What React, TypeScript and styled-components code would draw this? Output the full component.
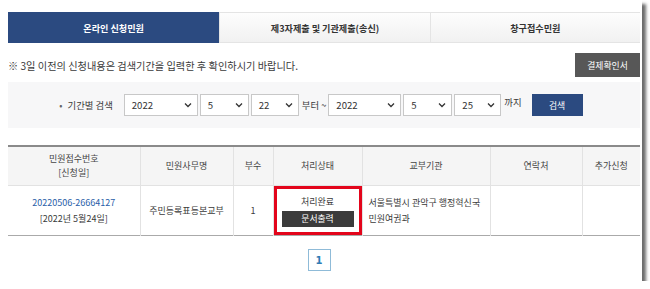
import React, { useState } from 'react'
import styled, { createGlobalStyle } from 'styled-components'

const GlobalStyle = createGlobalStyle`
  html, body {
    margin: 0;
    padding: 0;
    background: #ffffff;
  }
  body {
    font-family: "Noto Sans CJK KR", "Noto Sans", sans-serif;
    color: #333;
  }
`

const Frame = styled.div`
  width: 642px;
  height: 281px;
  box-sizing: border-box;
  padding: 12px 2px 0 8px;
  background: #fff;
  box-shadow: 4px 4px 3px rgba(60, 60, 60, 0.75);
  display: flex;
  flex-direction: column;
`

const Tabs = styled.div`
  display: flex;
  height: 31px;
  border-top: 1px solid #e4e4e4;
  border-bottom: 1px solid #e4e4e4;
  box-sizing: border-box;
`

const Tab = styled.div<{ active?: boolean; w: number }>`
  width: ${({ w }) => w}px;
  display: flex;
  align-items: center;
  justify-content: center;
  font-size: 9.1px;
  font-weight: 700;
  color: ${({ active }) => (active ? '#fff' : '#333')};
  background: ${({ active }) => (active ? '#2b4a80' : 'linear-gradient(#fdfdfd, #f1f1f1)')};
  border-left: ${({ active }) => (active ? 'none' : '1px solid #e4e4e4')};
  margin: ${({ active }) => (active ? '-1px 0' : '0')};
`

const NoticeRow = styled.div`
  display: flex;
  align-items: center;
  justify-content: space-between;
  margin-top: 10px;
  height: 24px;
`

const Notice = styled.p`
  margin: 0;
  font-size: 10.2px;
  color: #3a3a3a;
`

const DarkButton = styled.button`
  border: none;
  background: #575757;
  color: #fff;
  font-family: inherit;
  font-size: 8.8px;
  height: 24px;
  width: 65px;
  padding: 0;
`

const SearchPanel = styled.div`
  margin-top: 5px;
  height: 46px;
  background: #f7f7f8;
  display: flex;
  align-items: center;
  justify-content: center;
  padding-right: 6px;
  font-size: 9.4px;
  color: #3a3a3a;
`

const Label = styled.span`
  margin-right: 11px;
  &::before {
    content: '•';
    margin-right: 5px;
    color: #666;
  }
`

const SelectBox = styled.div<{ w: number }>`
  width: ${({ w }) => w}px;
  height: 22px;
  box-sizing: border-box;
  border: 1px solid #c8c8c8;
  background: #fff;
  display: flex;
  align-items: center;
  justify-content: space-between;
  padding: 0 5px 0 7px;
  margin-right: 2px;
  font-size: 9.6px;
  color: #333;
`

const Word = styled.span<{ raised?: boolean }>`
  margin: 0 2px 0 1px;
  align-self: ${({ raised }) => (raised ? 'flex-start' : 'center')};
  margin-top: ${({ raised }) => (raised ? '13px' : '0')};
`

const BlueButton = styled.button`
  margin-left: 8px;
  width: 51px;
  height: 22px;
  border: none;
  background: #2b4a80;
  color: #fff;
  font-family: inherit;
  font-size: 8.8px;
  padding: 0;
`

const Table = styled.table`
  margin-top: 17px;
  width: 632px;
  border-collapse: collapse;
  table-layout: fixed;
  border-top: 2px solid #8a8a8a;
  border-bottom: 1px solid #aaa;
  font-size: 9px;
`

const Th = styled.th`
  height: 38px;
  padding: 0;
  background: #f5f5f5;
  color: #444;
  font-weight: 400;
  line-height: 1.6;
  border-left: 1px solid #e2e2e2;
  border-bottom: 1px solid #e2e2e2;
  &:first-child {
    border-left: none;
  }
`

const Td = styled.td<{ left?: boolean; highlight?: boolean }>`
  height: 49px;
  text-align: ${({ left }) => (left ? 'left' : 'center')};
  padding: ${({ left }) => (left ? '0 6px' : '0')};
  color: #3a3a3a;
  line-height: 1.7;
  border-left: 1px solid #e2e2e2;
  box-shadow: ${({ highlight }) => (highlight ? 'inset 0 0 0 3px #e3051b' : 'none')};
  &:first-child {
    border-left: none;
  }
`

const Link = styled.a`
  color: #2a5ea8;
  text-decoration: none;
`

const PrintButton = styled.div`
  margin: 1px auto 0;
  width: 72px;
  height: 16px;
  line-height: 16px;
  background: #3b3b3b;
  color: #fff;
  font-size: 8.8px;
`

const Pager = styled.div`
  display: flex;
  justify-content: center;
  margin-top: 13px;
  padding-right: 10px;
`

const PageNum = styled.button`
  width: 23px;
  height: 22px;
  border: 1px solid #8fbbd8;
  background: #fff;
  color: #2f7cb4;
  font-family: "DejaVu Sans", sans-serif;
  font-weight: 700;
  font-size: 10px;
  padding: 0;
`

const Chevron = () => (
  <svg width="8" height="6" viewBox="0 0 8 6">
    <path d="M1 1.5 L4 4.5 L7 1.5" fill="none" stroke="#333" strokeWidth="1.3" />
  </svg>
)

const Select = ({ value, w }: { value: string; w: number }) => (
  <SelectBox w={w}>
    <span>{value}</span>
    <Chevron />
  </SelectBox>
)

const tabs = [
  { label: '온라인 신청민원', w: 212 },
  { label: '제3자제출 및 기관제출(송신)', w: 210 },
  { label: '창구접수민원', w: 210 }
]

const cols = [132, 93, 40, 89, 128, 92, 58]

export default function App() {
  const [active, setActive] = useState(0)

  return (
    <>
      <GlobalStyle />
      <Frame>
        <Tabs>
          {tabs.map((t, i) => (
            <Tab key={t.label} w={t.w} active={i === active} onClick={() => setActive(i)}>
              {t.label}
            </Tab>
          ))}
        </Tabs>
        <NoticeRow>
          <Notice>※ 3일 이전의 신청내용은 검색기간을 입력한 후 확인하시기 바랍니다.</Notice>
          <DarkButton>결제확인서</DarkButton>
        </NoticeRow>
        <SearchPanel>
          <Label>기간별 검색</Label>
          <Select value="2022" w={74} />
          <Select value="5" w={49} />
          <Select value="22" w={48} />
          <Word>부터 ~</Word>
          <Select value="2022" w={73} />
          <Select value="5" w={49} />
          <Select value="25" w={47} />
          <Word raised>까지</Word>
          <BlueButton>검색</BlueButton>
        </SearchPanel>
        <Table>
          <colgroup>
            {cols.map((w, i) => (
              <col key={i} style={{ width: w }} />
            ))}
          </colgroup>
          <thead>
            <tr>
              <Th>
                민원접수번호
                <br />
                [신청일]
              </Th>
              <Th>민원사무명</Th>
              <Th>부수</Th>
              <Th>처리상태</Th>
              <Th>교부기관</Th>
              <Th>연락처</Th>
              <Th>추가신청</Th>
            </tr>
          </thead>
          <tbody>
            <tr>
              <Td>
                <Link href="#">20220506-26664127</Link>
                <br />
                [2022년 5월24일]
              </Td>
              <Td>주민등록표등본교부</Td>
              <Td>1</Td>
              <Td highlight>
                처리완료
                <PrintButton>문서출력</PrintButton>
              </Td>
              <Td left>
                서울특별시 관악구 행정혁신국
                <br />
                민원여권과
              </Td>
              <Td />
              <Td />
            </tr>
          </tbody>
        </Table>
        <Pager>
          <PageNum>1</PageNum>
        </Pager>
      </Frame>
    </>
  )
}
